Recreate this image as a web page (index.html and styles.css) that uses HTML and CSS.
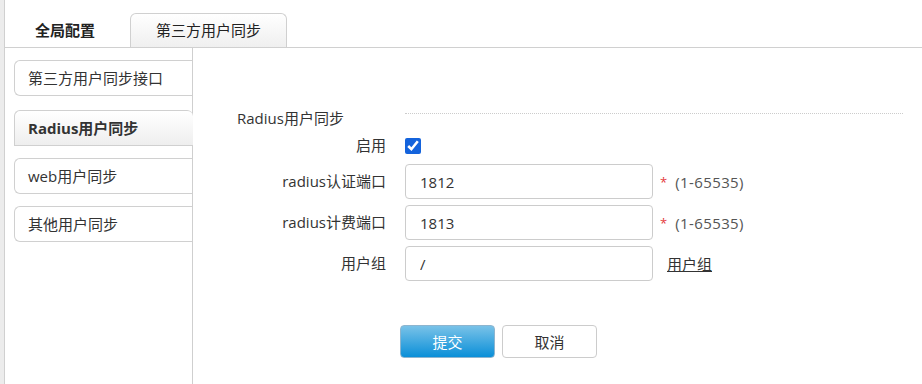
FILE: index.html
```html
<!DOCTYPE html>
<html lang="zh-CN">
<head>
  <meta charset="UTF-8">
  <meta name="viewport" content="width=device-width, initial-scale=1.0">
  <title>第三方用户同步</title>
  <link rel="stylesheet" href="styles.css">
</head>
<body>

  <div class="page">
    <!-- Top tabs -->
    <div class="tabs">
      <div class="tab">全局配置</div>
      <div class="tab tab-active">第三方用户同步</div>
    </div>

    <div class="main">
      <!-- Side menu -->
      <div class="sidebar">
        <div class="side-item">第三方用户同步接口</div>
        <div class="side-item side-active">Radius用户同步</div>
        <div class="side-item">web用户同步</div>
        <div class="side-item">其他用户同步</div>
      </div>

      <!-- Form -->
      <div class="content">
        <div class="form">
          <div class="section-title">Radius用户同步</div>
          <div class="section-line"></div>

          <label class="label">启用</label>
          <div class="field">
            <input type="checkbox" class="check" checked>
          </div>

          <label class="label">radius认证端口</label>
          <div class="field">
            <input type="text" class="text-input" value="1812">
            <span class="required">*</span>
            <span class="hint">(1-65535)</span>
          </div>

          <label class="label">radius计费端口</label>
          <div class="field">
            <input type="text" class="text-input" value="1813">
            <span class="required">*</span>
            <span class="hint">(1-65535)</span>
          </div>

          <label class="label">用户组</label>
          <div class="field">
            <input type="text" class="text-input" value="/">
            <a href="#" class="link">用户组</a>
          </div>
        </div>

        <div class="actions">
          <button class="btn btn-primary">提交</button>
          <button class="btn">取消</button>
        </div>
      </div>
    </div>
  </div>

</body>
</html>
```

FILE: styles.css
```css
body {
  margin: 0;
  background-color: #ececec;
  font-family: "Open Sans", "Noto Sans CJK SC", sans-serif;
  font-size: 15px;
  color: #333;
}

.page {
  margin-left: 4px;
  height: 384px;
  background-color: #fff;
  border-left: 1px solid #d0d0d0;
  display: flex;
  flex-direction: column;
}

/* Tabs */
.tabs {
  height: 47px;
  border-bottom: 1px solid #d0d0d0;
  display: flex;
  align-items: flex-end;
  gap: 15px;
  padding-left: 10px;
}

.tab {
  width: 100px;
  height: 34px;
  line-height: 34px;
  text-align: center;
  font-weight: bold;
  color: #222;
}

.tab-active {
  width: 155px;
  height: 33px;
  line-height: 33px;
  font-weight: normal;
  border: 1px solid #d0d0d0;
  border-bottom: none;
  border-radius: 6px 6px 0 0;
  background: linear-gradient(#ffffff, #efefef);
}

/* Main area */
.main {
  flex: 1;
  display: flex;
}

.sidebar {
  width: 178px;
  border-right: 1px solid #cfcfcf;
  padding: 12px 0 0 9px;
  display: flex;
  flex-direction: column;
  gap: 12px;
}

.side-item {
  height: 34px;
  line-height: 34px;
  padding-left: 13px;
  border: 1px solid #d0d0d0;
  border-right: none;
  border-radius: 6px 0 0 6px;
  background-color: #fff;
}

.side-active {
  margin-top: 2px;
  margin-right: -1px;
  font-weight: bold;
  border-radius: 6px 6px 0 0;
  border-right: none;
  background: linear-gradient(#ffffff, #eeeeee);
}

.content {
  flex: 1;
  padding: 60px 19px 0 0;
}

.form {
  display: grid;
  grid-template-columns: 193px 1fr;
  column-gap: 19px;
  row-gap: 6px;
  grid-auto-rows: 35px;
  grid-template-rows: 20px 24px;
}

.section-title {
  padding-left: 44px;
  line-height: 20px;
}

.section-line {
  align-self: start;
  margin-top: 5px;
  border-top: 1px dotted #cccccc;
}

.label {
  text-align: right;
  align-self: center;
  margin-top: -3px;
}

.field {
  display: flex;
  align-items: center;
}

.check {
  width: 16px;
  height: 16px;
  margin: 0;
  accent-color: #1463dc;
}

.text-input {
  width: 232px;
  height: 33px;
  padding: 0 0 0 14px;
  border: 1px solid #cccccc;
  border-radius: 4px;
  font-family: "Open Sans", "Noto Sans CJK SC", sans-serif;
  font-size: 15px;
  color: #333;
  box-sizing: content-box;
}

.required {
  color: #e4393c;
  margin-left: 7px;
  font-size: 13px;
}

.hint {
  color: #555;
  margin-left: 8px;
  letter-spacing: 0.4px;
}

.link {
  color: #333;
  margin-left: 14px;
  text-decoration: underline;
}

/* Buttons */
.actions {
  display: flex;
  gap: 7px;
  padding-left: 207px;
  margin-top: 44px;
}

.btn {
  width: 95px;
  height: 33px;
  border: 1px solid #cccccc;
  border-radius: 4px;
  background-color: #fff;
  font-family: "Open Sans", "Noto Sans CJK SC", sans-serif;
  font-size: 15px;
  color: #333;
  cursor: pointer;
}

.btn-primary {
  color: #fff;
  border-color: #8db5cf;
  background: linear-gradient(#79c2e8, #0a8fd8);
}
```
